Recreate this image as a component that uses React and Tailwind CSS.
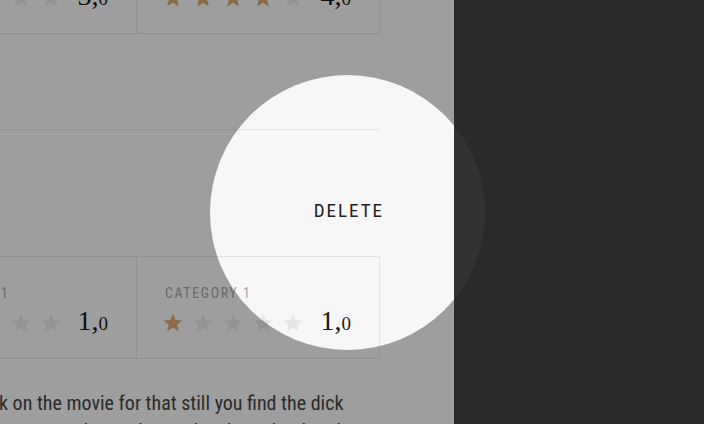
import React from "react";

const Star = ({ filled }) => (
  <svg width="20" height="20" viewBox="0 0 20 20" className="block">
    <polygon
      points="10,0.8 12.6,7.1 19.4,7.4 14.1,11.7 16,18.6 10,14.8 4,18.6 5.9,11.7 0.6,7.4 7.4,7.1"
      fill={filled ? "#dca670" : "#e6e6e6"}
    />
  </svg>
);

const Rating = ({ label, value, filled, last }) => (
  <div className={`flex flex-col pl-[28px] pr-[28px] pt-[26px] ${last ? "" : "border-r border-[#e3e3e3]"}`}>
    <div className="text-[14px] leading-[20px] tracking-[1.6px] text-[#a6a6a6] uppercase [font-stretch:condensed]">
      {label}
    </div>
    <div className="mt-[3px] flex items-center justify-between">
      <div className="ml-[-2px] flex items-center gap-[10px]">
        {[0, 1, 2, 3, 4].map((i) => (
          <Star key={i} filled={i < filled} />
        ))}
      </div>
      <div className="text-[28px] leading-[30px] text-[#1a1a1a] [font-family:'Liberation_Serif',serif]">
        {value}
        <span className="text-[19px]">0</span>
      </div>
    </div>
  </div>
);

export default function App() {
  return (
    <div
      className="relative w-[704px] h-[424px] overflow-hidden bg-[#f7f7f7]"
      style={{ fontFamily: "'Roboto Condensed', Roboto, 'Liberation Sans', sans-serif" }}
    >
      <div className="ml-[-106px] mt-[-69px] w-[486px] flex flex-col">
        <div className="grid grid-cols-2 h-[103px] border border-[#e3e3e3]">
          <Rating label="Category 1" value="3," filled={3} />
          <Rating label="Category 2" value="4," filled={4} last />
        </div>
        <div className="h-[95px]" />
        <div className="border-t border-[#e6e6e6] pt-[61px] pb-[25px]">
          <div className="h-[40px] flex items-center justify-end mr-[-4px]">
            <span className="text-[19px] tracking-[2px] text-[#222] [font-stretch:condensed]">DELETE</span>
          </div>
        </div>
        <div className="grid grid-cols-2 h-[103px] border border-[#e3e3e3]">
          <Rating label="Category 1" value="1," filled={1} />
          <Rating label="Category 1" value="1," filled={1} last />
        </div>
      </div>
      <div className="mt-[30px] ml-[-1px] text-[20px] leading-[28px] text-[#444] whitespace-nowrap [font-stretch:condensed]">
        <p>k on the movie for that still you find the dick</p>
        <p>moments that make you laugh out loud at the screen</p>
      </div>

      <div className="absolute left-[210px] top-[75px] w-[275px] h-[275px] rounded-full shadow-[0_0_0_1200px_rgba(0,0,0,0.36)]" />
      <div className="absolute right-0 top-0 w-[250px] h-full bg-[rgba(29,29,31,0.9)]" />
    </div>
  );
}
